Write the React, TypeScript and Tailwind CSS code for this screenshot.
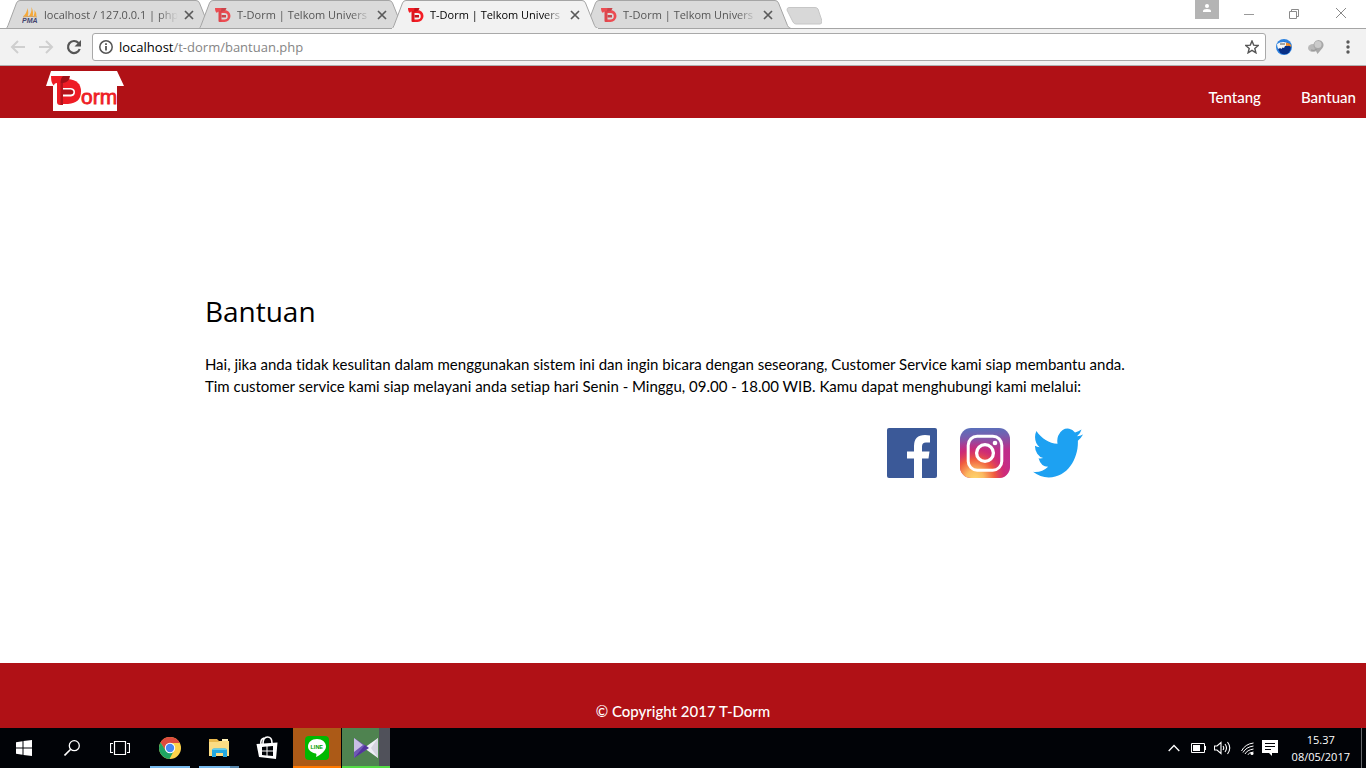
import React from "react";

const UI_FONT = "font-['Open_Sans','Noto_Sans',sans-serif]";
const PAGE_FONT = "font-['Lato',sans-serif] [font-variant-ligatures:none]";

function TdMark({ className }: { className?: string }) {
  return (
    <svg viewBox="0 0 32 30" className={className} aria-hidden="true">
      <path d="M12 5 H19 A12 12 0 0 1 19 29 H12 V24 H18.500 A7 6.500 0 0 0 18.500 11 H12 Z" fill="#f31d25" />
      <path d="M0 1 H14 V8 H8 Q4 8 4 11 Q0 9 0 1 Z" fill="#f31d25" />
      <path d="M7 7 H13 V29 H9 Q7 29 7 27 Z" fill="#e0161e" />
      <path d="M13 1 H23 Q22 7 15 8 H12 Z" fill="#c5121b" />
      <path d="M13 15 H22 V20 H13 Z" fill="#c5121b" />
    </svg>
  );
}

function PmaIcon() {
  return (
    <svg viewBox="0 0 16 16" className="size-4 shrink-0" aria-hidden="true">
      <path d="M5.500 1 Q7 6 5.500 9.500 H1 Q5 6 5.500 1 Z M9.500 0 Q12 6 10.500 9.500 H6.500 Q10 6 9.500 0 Z M12.500 3 Q15 6 14.500 9.500 H11.500 Q13 6 12.500 3 Z" fill="#f5a93a" />
      <path d="M1 10 Q8 8.500 15 10" stroke="#d4a160" fill="none" />
      <text x="0" y="16" fontSize="7" fontWeight="700" fontStyle="italic" fontFamily="Liberation Sans, sans-serif" fill="#45456f">
        PMA
      </text>
    </svg>
  );
}

type TabProps = { title: string; active?: boolean; pma?: boolean };

function Tab({ title, active, pma }: TabProps) {
  return (
    <div className={`relative -ml-[14px] flex h-[29px] w-[207px] shrink-0 items-center pl-4 ${active ? "z-10" : ""}`}>
      <svg viewBox="0 0 207 29" className="absolute inset-0 h-full w-full" aria-hidden="true">
        <path
          d="M0 28.500 Q1 28 2 25.500 L10.500 3 Q11.500 .5 14 .5 H190 Q192.500 .5 193.500 3 L202.500 25.500 Q203.500 28 206 28.500"
          fill={active ? "#f2f2f2" : "#dadada"}
          stroke="#a5a5a5"
        />
        {active && <path d="M0 28.500 H206" stroke="#f2f2f2" />}
        {!active && <path d="M0 28.500 H207" stroke="#a5a5a5" />}
      </svg>
      <div className="relative flex items-center">
        {pma ? <PmaIcon /> : <TdMark className={`size-4 shrink-0 ${active ? "" : "opacity-75"}`} />}
        <a
          href="#"
          className={`ml-[6px] w-[134px] text-[11px] leading-4 whitespace-nowrap mask-r-from-85% ${active ? "text-black" : "text-[#555]"}`}
        >
          {title}
        </a>
        <button type="button" aria-label="Close tab" className="ml-[6px] flex size-[10px] items-center justify-center">
          <svg viewBox="0 0 10 10" className="size-[10px]">
            <path d="M1 1 L9 9 M9 1 L1 9" stroke="#5a5a5a" strokeWidth="1.700" />
          </svg>
        </button>
      </div>
    </div>
  );
}

function TabStrip() {
  return (
    <div className="flex h-[29px] bg-[linear-gradient(to_top,#a5a5a5_1px,#fff_1px)]">
      <div className="flex flex-1 pl-5">
        <Tab title="localhost / 127.0.0.1 | php" pma />
        <Tab title="T-Dorm | Telkom Univers" />
        <Tab title="T-Dorm | Telkom Univers" active />
        <Tab title="T-Dorm | Telkom Univers" />
        <button type="button" aria-label="New tab" className="-ml-[6px] h-8 w-[36px]">
          <svg viewBox="0 0 36 32" className="h-8 w-[36px]">
            <path d="M3 7.500 H29 Q31 7.500 32 9 L36 21 Q36 24 34 24 H10 Q8 24 7 22 L1 10 Q1 7.500 3 7.500 Z" fill="#d8d8d8" stroke="#c6c6c6" />
          </svg>
        </button>
      </div>
      <div className="flex items-start">
        <button type="button" aria-label="Profile" className="mr-[7px] flex h-[19px] w-6 justify-center bg-[#b4b4b4]">
          <svg viewBox="0 0 24 19" className="h-[19px] w-6">
            <circle cx="12" cy="6" r="2" fill="#fff" />
            <path d="M8 12 V11 Q8 9 12 9 Q16 9 16 11 V12 Z" fill="#fff" />
          </svg>
        </button>
        <button type="button" aria-label="Minimize" className="flex h-[27px] w-[46px] items-center justify-center">
          <svg viewBox="0 0 10 10" className="size-[10px]">
            <path d="M0 5.500 H10" stroke="#999" />
          </svg>
        </button>
        <button type="button" aria-label="Restore" className="flex h-[27px] w-11 items-center justify-center">
          <svg viewBox="0 0 10 10" className="size-[10px]" fill="none" stroke="#8a8a8a">
            <path d="M.5 2.500 H7.500 V9.500 H.5 Z M2.500 2.500 V.5 H9.500 V7.500 H7.500" />
          </svg>
        </button>
        <button type="button" aria-label="Close" className="flex h-[26px] w-[50px] items-center justify-center">
          <svg viewBox="0 0 10 10" className="size-[10px]">
            <path d="M0 0 L10 10 M10 0 L0 10" stroke="#888" />
          </svg>
        </button>
      </div>
    </div>
  );
}

function Toolbar() {
  return (
    <div className="flex h-[37px] items-center border-b border-[#b0b0b0] bg-[#f2f2f2] pl-[10px]">
      <button type="button" aria-label="Back" className="mr-3 size-4">
        <svg viewBox="0 0 16 16" className="size-4" fill="none" stroke="#cfcfcf" strokeWidth="2">
          <path d="M15 8 H2 M8 2 L2 8 L8 14" />
        </svg>
      </button>
      <button type="button" aria-label="Forward" className="mr-3 size-4">
        <svg viewBox="0 0 16 16" className="size-4" fill="none" stroke="#cfcfcf" strokeWidth="2">
          <path d="M1 8 H14 M8 2 L14 8 L8 14" />
        </svg>
      </button>
      <button type="button" aria-label="Reload" className="mr-[10px] size-4">
        <svg viewBox="0 0 16 16" className="size-4">
          <path d="M12.500 4 A6 6 0 1 0 13.700 10" fill="none" stroke="#555" strokeWidth="2.200" />
          <path d="M15 1 V7.500 H8.500 Z" fill="#555" />
        </svg>
      </button>
      <div className="flex h-7 flex-1 items-center rounded-[3px] border border-[#a9a9a9] bg-white px-[6px]">
        <svg viewBox="0 0 14 14" className="size-[14px]" fill="none" stroke="#555">
          <circle cx="7" cy="7" r="6.200" strokeWidth="1.500" />
          <path d="M7 6 V10.500 M7 3.200 V4.900" strokeWidth="1.800" />
        </svg>
        <button type="button" aria-label="Page address" className="ml-[6px] flex-1 text-left text-[13px] leading-5 text-[#858585]">
          <span className="text-black">localhost</span>/t-dorm/bantuan.php
        </button>
        <button type="button" aria-label="Bookmark" className="size-[14px]">
          <svg viewBox="0 0 14 14" className="size-[14px]">
            <path d="M7 1 L8.700 5.100 L13.200 5.500 L9.800 8.400 L10.900 12.800 L7 10.400 L3.100 12.800 L4.200 8.400 L.8 5.500 L5.300 5.100 Z" fill="none" stroke="#555" strokeWidth="1.400" />
          </svg>
        </button>
      </div>
      <button type="button" aria-label="Download extension" className="ml-[10px] size-4">
        <svg viewBox="0 0 16 16" className="size-4">
          <circle cx="8" cy="8" r="8" fill="#2d82df" />
          <circle cx="8.500" cy="9" r="6.300" fill="#082f86" />
          <path d="M1 5 Q6 1.500 12 4 L12.500 6.500 L9 7 L8 9 L6.500 8.500 L5.500 10 L4 9 L2.500 10 Q1 8 1 5 Z" fill="#f7f7f5" />
          <path d="M10 4 Q15 3.500 15.500 8 Q13 6.300 10 7 Z" fill="#f08c28" />
          <path d="M4 5 H9" stroke="#555" />
        </svg>
      </button>
      <button type="button" aria-label="Balloon extension" className="ml-4 size-4">
        <svg viewBox="0 0 16 16" className="size-4">
          <ellipse cx="5" cy="9" rx="5" ry="4" fill="#b9b9b9" />
          <path d="M10.500 1 A5 5 0 0 1 14.500 9 L9.500 15 L6.500 9 A5 5 0 0 1 10.500 1" fill="#a8a8a8" />
          <circle cx="10" cy="5.500" r="3.500" fill="#cbcbcb" />
          <path d="M3 11 Q6 12 8.500 10.500" stroke="#929292" fill="none" />
        </svg>
      </button>
      <button type="button" aria-label="Menu" className="ml-4 mr-[10px] size-4">
        <svg viewBox="0 0 16 16" className="size-4" fill="#5a5a5a">
          <circle cx="8" cy="3" r="1.700" />
          <circle cx="8" cy="8" r="1.700" />
          <circle cx="8" cy="13" r="1.700" />
        </svg>
      </button>
    </div>
  );
}

function HouseLogo() {
  return (
    <svg viewBox="0 0 80 40" className="h-10 w-20" role="img" aria-label="T-Dorm">
      <path d="M6 0 H72 L79 15 H72 V40 H8 V15 H1 Z" fill="#fff" />
      <path d="M18 8 H23 Q36 9 36 20.500 Q36 32 23 33 H18 Z" fill="#ee1c25" />
      <path d="M18 17 H26 Q30 17.500 30 21 Q30 25 26 25.500 H18 Z" fill="#fff" />
      <path d="M18 18.500 H26 Q28.500 19 28.500 21 Q28.500 23 26 23.500 H18 Z" fill="#b3131b" />
      <path d="M6 5 H18 V12 H12 Q9 12 9 14.500 Q6 13 6 5 Z" fill="#ee1c25" />
      <path d="M12 11 H18 V34 H15 Q12 34 12 31 Z" fill="#ee1c25" />
      <path d="M15.500 12 H18 V34 H15.500 Z" fill="#b3131b" />
      <path d="M18 5 H25 Q24.500 11 18 12 H15.500 Q15.500 7 18 5 Z" fill="#9f1017" />
      <text x="36" y="33" fontSize="21" fontFamily="Liberation Sans, sans-serif" fontWeight="400" fill="#ee1c25" stroke="#ee1c25" strokeWidth=".8">
        orm
      </text>
    </svg>
  );
}

function SocialLinks() {
  return (
    <div className="flex justify-end gap-[23px] pr-[78px]">
      <a href="#" aria-label="Facebook">
        <svg viewBox="0 0 50 50" className="size-[50px]">
          <rect width="50" height="50" rx="2" fill="#3b5998" />
          <path d="M27 50 V30.500 H20 V23.500 H27 V18 Q27 7 38 7 Q41 7 43 7.500 V14.500 H39 Q35 14.500 35 18.500 V23.500 H42.500 L41.500 30.500 H35 V50 Z" fill="#fff" />
        </svg>
      </a>
      <a href="#" aria-label="Instagram">
        <svg viewBox="0 0 50 50" className="size-[50px]">
          <defs>
            <linearGradient id="igBase" x1=".5" y1="0" x2=".55" y2="1">
              <stop offset="0" stopColor="#5b6fba" />
              <stop offset=".15" stopColor="#7460b0" />
              <stop offset=".45" stopColor="#bf2d89" />
              <stop offset="1" stopColor="#c52c8c" />
            </linearGradient>
            <radialGradient id="igWarm" cx=".3" cy="1.02" r=".8">
              <stop offset="0" stopColor="#ffd66c" />
              <stop offset=".22" stopColor="#fbbb61" />
              <stop offset=".5" stopColor="#f05b3e" />
              <stop offset=".75" stopColor="#d5286b" stopOpacity=".6" />
              <stop offset="1" stopColor="#c52c8c" stopOpacity="0" />
            </radialGradient>
          </defs>
          <rect width="50" height="50" rx="11" fill="url(#igBase)" />
          <rect width="50" height="50" rx="11" fill="url(#igWarm)" />
          <rect x="8.200" y="8.200" width="33.600" height="34" rx="9" fill="none" stroke="#fff" strokeWidth="3" />
          <circle cx="25" cy="25" r="8.400" fill="none" stroke="#fff" strokeWidth="3.300" />
          <circle cx="35" cy="15" r="2.300" fill="#fff" />
        </svg>
      </a>
      <a href="#" aria-label="Twitter">
        <svg viewBox="0 2 24 20" preserveAspectRatio="none" className="size-[50px]">
          <path
            d="M23.953 4.570a10 10 0 01-2.825.775 4.958 4.958 0 002.163-2.723c-.951.555-2.005.959-3.127 1.184a4.920 4.920 0 00-8.384 4.482C7.690 8.095 4.067 6.130 1.640 3.162a4.822 4.822 0 00-.666 2.475c0 1.710.870 3.213 2.188 4.096a4.904 4.904 0 01-2.228-.616v.060a4.923 4.923 0 003.946 4.827 4.996 4.996 0 01-2.212.085 4.936 4.936 0 004.604 3.417 9.867 9.867 0 01-6.102 2.105c-.390 0-.779-.023-1.170-.067a13.995 13.995 0 007.557 2.209c9.053 0 13.998-7.496 13.998-13.985 0-.210 0-.420-.015-.630A9.935 9.935 0 0024 4.590z"
            fill="#1da1f2"
          />
        </svg>
      </a>
    </div>
  );
}

function TaskButton({ label, className, children }: { label: string; className?: string; children: React.ReactNode }) {
  return (
    <button type="button" aria-label={label} className={`flex h-10 items-center justify-center ${className ?? ""}`}>
      {children}
    </button>
  );
}

function Taskbar() {
  return (
    <div className={`flex h-10 shrink-0 bg-[#010307] text-white ${UI_FONT}`}>
      <TaskButton label="Start" className="w-12">
        <svg viewBox="0 0 16 16" className="size-4" fill="#fff">
          <path d="M0 2.300 L6.500 1.300 V7.500 H0 Z M7.500 1.100 L16 0 V7.500 H7.500 Z M0 8.500 H6.500 V14.700 L0 13.700 Z M7.500 8.500 H16 V16 L7.500 14.900 Z" />
        </svg>
      </TaskButton>
      <TaskButton label="Search" className="w-12">
        <svg viewBox="0 0 16 16" className="size-4" fill="none" stroke="#fff" strokeWidth="1.300">
          <circle cx="10.300" cy="5.700" r="5" />
          <path d="M6.700 9.300 L.5 15.500" strokeWidth="1.600" />
        </svg>
      </TaskButton>
      <TaskButton label="Task view" className="w-12">
        <svg viewBox="0 0 20 14" className="h-[14px] w-5" fill="none" stroke="#fff">
          <path d="M4.500 .5 H15.500 V13.500 H4.500 Z M3 2.500 H.5 V11.500 H3 M17 2.500 H19.500 V11.500 H17" strokeWidth="1.200" />
        </svg>
      </TaskButton>
      <TaskButton label="Google Chrome" className="mx-[6px] w-10 border-b-2 border-[#76b9ed] pt-[2px]">
        <svg viewBox="0 0 22 22" className="size-[22px]">
          <circle cx="11" cy="11" r="11" fill="#fdd24a" />
          <path d="M1.500 5.500 A11 11 0 0 1 20.800 6 H11 L6.500 13.500 Z" fill="#dd4b3e" />
          <path d="M1.500 5.500 A11 11 0 0 0 10.500 22 L15 13.500 L6.700 13.500 Z" fill="#1fa463" />
          <circle cx="11" cy="11" r="5.200" fill="#fff" />
          <circle cx="11" cy="11" r="4.200" fill="#4688f4" />
        </svg>
      </TaskButton>
      <TaskButton
        label="File Explorer"
        className="ml-[3px] mr-1 w-10 bg-[linear-gradient(to_right,#76b9ed_31px,#5787ad_31px)] bg-[length:40px_2px] bg-bottom bg-no-repeat"
      >
        <svg viewBox="0 0 22 20" className="h-5 w-[22px]">
          <path d="M1 1 H9 L11 3 H21 V18 H1 Z" fill="#e9b94e" />
          <path d="M1 4 H10 L12 3 H21 V18 H1 Z" fill="#fbdc84" />
          <path d="M14 1 H20 V3 H14 Z" fill="#fff1b8" />
          <path d="M4 19 V12 Q4 10.500 6 10.500 H17 Q19 10.500 19 12 V19 H15 V15 H8 V19 Z" fill="#23a9e1" />
          <path d="M4 12 Q4 10.500 6 10.500 H17 Q19 10.500 19 12 Z" fill="#61cdf2" />
        </svg>
      </TaskButton>
      <TaskButton label="Store" className="w-12">
        <svg viewBox="0 0 22 24" className="h-6 w-[22px]">
          <path d="M7 8 Q7 1 11.500 1 Q16 1 16 7 M5 9 Q4 3 8 2" fill="none" stroke="#fff" strokeWidth="1.600" />
          <path d="M.5 8 L21.500 6.500 L20 23 L3 21 Z" fill="#fff" />
          <path d="M6 11 L10.500 10.500 V14.500 H6 Z M11.500 10.400 L17 10 V14.500 H11.500 Z M6 15.500 H10.500 V19.500 L6 19 Z M11.500 15.500 H17 V20 L11.500 19.600 Z" fill="#010307" />
        </svg>
      </TaskButton>
      <TaskButton label="LINE" className="ml-[2px] w-12 border-b-2 border-[#ff7900] bg-[#ac5a17] pt-[2px]">
        <svg viewBox="0 0 24 24" className="size-6">
          <rect width="24" height="24" rx="4" fill="#00b900" />
          <path d="M12 3 C6.500 3 3 6.500 3 10.500 C3 14.500 7 17 11 17.500 Q12 18 11 21 C15 19 21 15 21 10.500 C21 6 17 3 12 3 Z" fill="#fff" />
          <text x="5.500" y="13" fontSize="5.500" fontWeight="700" fontFamily="Liberation Sans, sans-serif" fill="#00a000">
            LINE
          </text>
        </svg>
      </TaskButton>
      <TaskButton label="Media player" className="ml-px w-12 border-b-2 border-[#54dc45] bg-[linear-gradient(to_right,#4f8350_37px,#50515a_37px)] pt-[2px]">
        <svg viewBox="0 0 26 24" className="h-6 w-[26px]">
          <path d="M1 2 L16 12 L1 22 Z" fill="#7058b5" />
          <path d="M1 2 L10 9 L1 16 Z" fill="#c9bfe6" />
          <path d="M25 2 L11 12 L25 22 Z" fill="#eeeef5" />
          <path d="M25 2 L18 12 L25 22 Z" fill="#d5d4df" />
          <path d="M1 22 L16 12 L12 9 Z" fill="#53359c" />
        </svg>
      </TaskButton>
      <div className="ml-auto flex items-center">
        <TaskButton label="Show hidden icons" className="mr-[11px] w-3">
          <svg viewBox="0 0 12 8" className="h-2 w-3">
            <path d="M.7 7 L6 1.500 L11.300 7" fill="none" stroke="#fff" strokeWidth="1.300" />
          </svg>
        </TaskButton>
        <TaskButton label="Battery" className="mr-2 w-[15px]">
          <svg viewBox="0 0 15 10" className="h-[10px] w-[15px]">
            <path d="M.5 .5 H13.500 V9.500 H.5 Z" fill="none" stroke="#fff" />
            <path d="M2 2 H9 V8 H2 Z M13.500 3 H15 V7 H13.500 Z" fill="#fff" />
          </svg>
        </TaskButton>
        <TaskButton label="Volume" className="mr-[10px] w-[17px]">
          <svg viewBox="0 0 17 14" className="h-[14px] w-[17px]" fill="none" stroke="#fff" strokeWidth="1.100">
            <path d="M.5 5 H3 L7 1.500 V12.500 L3 9 H.5 Z M9 5 Q10.500 7 9 9 M11 3 Q14 7 11 11 M13.500 1 Q18 7 13.500 13" />
          </svg>
        </TaskButton>
        <TaskButton label="Network" className="mr-2 w-[13px]">
          <svg viewBox="0 0 13 13" className="size-[13px]" fill="none" stroke="#fff">
            <path d="M.5 9 Q4 2 12.500 1 M2 10.500 Q5 5 12.500 4 M4 12 Q6 8 12.500 7" strokeWidth="1" />
            <path d="M6.500 13 Q8 10.500 12.500 10" strokeWidth="1" />
            <circle cx="11" cy="11.500" r="1.500" fill="#fff" stroke="none" />
          </svg>
        </TaskButton>
        <TaskButton label="Notifications" className="w-4">
          <svg viewBox="0 0 16 16" className="size-4">
            <path d="M0 0 H16 V13 H10 V16 L7 13 H0 Z" fill="#fff" />
            <path d="M3 3.500 H13 M3 6.500 H13 M3 9.500 H9" stroke="#010307" />
          </svg>
        </TaskButton>
        <div className="ml-[14px] mr-[11px] flex flex-col text-center text-[11px] leading-[17px] tabular-nums">
          <time>15.37</time>
          <time>08/05/2017</time>
        </div>
        <div className="mr-1 h-10 w-px bg-[#65676b]" />
      </div>
    </div>
  );
}

export default function App() {
  return (
    <div className="flex min-h-screen flex-col bg-white">
      <div className={`shrink-0 ${UI_FONT}`}>
        <TabStrip />
        <Toolbar />
      </div>
      <div className={`flex flex-1 flex-col text-black ${PAGE_FONT}`}>
        <header className="flex h-[52px] items-start justify-between bg-[#b01116] pt-[5px] pl-[45px] pr-[10px]">
          <a href="#">
            <HouseLogo />
          </a>
          <nav className="flex gap-10 pt-4 text-[15px] leading-5 font-medium text-white">
            <a href="#">Tentang</a>
            <a href="#">Bantuan</a>
          </nav>
        </header>
        <main className="flex flex-1 flex-col justify-center px-[15%] pb-[13px]">
          <h1 className="font-['Open_Sans','Noto_Sans',sans-serif] text-[28px] leading-10">Bantuan</h1>
          <p className="mt-[22px] mb-[31px] text-[15px] leading-[22px]">
            Hai, jika anda tidak kesulitan dalam menggunakan sistem ini dan ingin bicara dengan seseorang, Customer Service kami siap membantu anda.
            <br />
            Tim customer service kami siap melayani anda setiap hari Senin - Minggu, 09.00 - 18.00 WIB. Kamu dapat menghubungi kami melalui:
          </p>
          <SocialLinks />
        </main>
        <footer className="flex h-[65px] items-end justify-center bg-[#b01116] pb-[7px] text-[15px] leading-5 font-medium text-white">
          © Copyright 2017 T-Dorm
        </footer>
      </div>
      <Taskbar />
    </div>
  );
}
